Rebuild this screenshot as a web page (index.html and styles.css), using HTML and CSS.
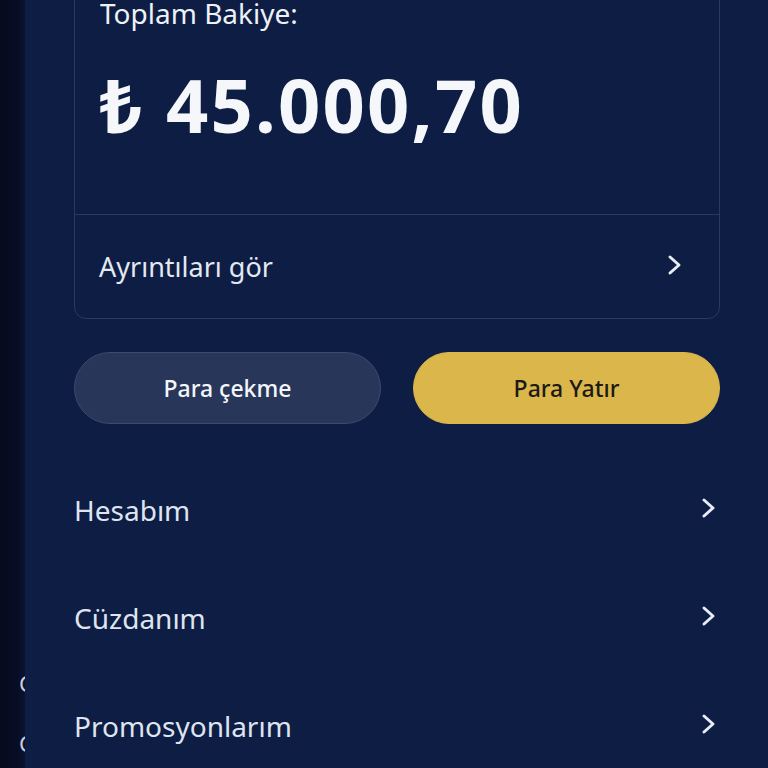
FILE: index.html
```html
<!DOCTYPE html>
<html lang="tr">
<head>
    <meta charset="UTF-8">
    <meta name="viewport" content="width=device-width, initial-scale=1.0">
    <title>Cüzdan</title>
    <link rel="stylesheet" href="styles.css">
</head>
<body>

    <div class="sayfa">
        <div class="arka-plan">
            <span class="harf harf-1">C</span>
            <span class="harf harf-2">C</span>
        </div>

        <div class="panel">
            <div class="bakiye-kart">
                <div class="bakiye-ust">
                    <div class="bakiye-etiket">Toplam Bakiye:</div>
                    <div class="bakiye-tutar">₺ 45.000,70</div>
                </div>
                <div class="bakiye-alt">
                    <span>Ayrıntıları gör</span>
                    <svg class="ok" width="16" height="22" viewBox="0 0 16 22"><path d="M3 3 L12 11 L3 19" fill="none" stroke="currentColor" stroke-width="3" stroke-linecap="round" stroke-linejoin="round"/></svg>
                </div>
            </div>

            <div class="butonlar">
                <button class="boton boton-cekme">Para çekme</button>
                <button class="boton boton-yatir">Para Yatır</button>
            </div>

            <ul class="menu">
                <li class="menu-satir">
                    <span>Hesabım</span>
                    <svg class="ok" width="16" height="22" viewBox="0 0 16 22"><path d="M3 3 L12 11 L3 19" fill="none" stroke="currentColor" stroke-width="3" stroke-linecap="round" stroke-linejoin="round"/></svg>
                </li>
                <li class="menu-satir">
                    <span>Cüzdanım</span>
                    <svg class="ok" width="16" height="22" viewBox="0 0 16 22"><path d="M3 3 L12 11 L3 19" fill="none" stroke="currentColor" stroke-width="3" stroke-linecap="round" stroke-linejoin="round"/></svg>
                </li>
                <li class="menu-satir">
                    <span>Promosyonlarım</span>
                    <svg class="ok" width="16" height="22" viewBox="0 0 16 22"><path d="M3 3 L12 11 L3 19" fill="none" stroke="currentColor" stroke-width="3" stroke-linecap="round" stroke-linejoin="round"/></svg>
                </li>
            </ul>
        </div>
    </div>

</body>
</html>
```

FILE: styles.css
```css
body {
    margin: 0;
    background-color: #060b1e;
    font-family: "Noto Sans", "Open Sans", sans-serif;
    overflow: hidden;
}
.sayfa {
    display: flex;
    height: 768px;
}
.arka-plan {
    width: 25px;
    flex-shrink: 0;
    position: relative;
    background: linear-gradient(to right, #050a1c 0%, #070d24 70%, #0a1330 100%);
}
/* harfler panelin arkasinda kaliyor */
.harf {
    position: absolute;
    left: 19px;
    color: #c9cfdc;
    font-size: 22px;
}
.harf-1 { top: 668px; }
.harf-2 { top: 728px; }
.panel {
    flex: 1;
    position: relative;
    z-index: 1;
    background-color: #0d1d44;
    padding: 0 48px 0 49px;
    color: #eef1f7;
}
.bakiye-kart {
    margin-top: -30px;
    border: 1px solid #2a3962;
    border-radius: 12px;
}
.bakiye-ust {
    padding: 0 25px;
    height: 243px;
    border-bottom: 1px solid #2a3962;
}
.bakiye-etiket {
    font-size: 28px;
    line-height: 26px;
    padding-top: 29px;
    color: #eef1f7;
}
.bakiye-tutar {
    font-size: 74px;
    font-weight: 700;
    line-height: 100px;
    margin-top: 29px;
    letter-spacing: 2.2px;
    color: #f6f7fa;
}
.bakiye-alt {
    display: flex;
    align-items: center;
    justify-content: space-between;
    height: 103px;
    padding: 0 36px 0 24px;
    font-size: 27px;
    color: #e4e8f1;
}
.ok {
    color: #e8ecf4;
    margin-top: -4px;
}
.butonlar {
    display: flex;
    gap: 32px;
    margin-top: 33px;
}
.boton {
    flex: 1;
    height: 72px;
    border-radius: 36px;
    font-family: "Noto Sans", "Open Sans", sans-serif;
    font-size: 23px;
    font-weight: 500;
    cursor: pointer;
}
.boton-cekme {
    background-color: #273659;
    border: 1px solid #3a4a70;
    color: #f4f6fa;
}
.boton-yatir {
    background-color: #dbb64a;
    border: 1px solid #dbb64a;
    color: #1b1a14;
}
.menu {
    list-style: none;
    margin: 32px 0 0 0;
    padding: 0;
}
.menu-satir {
    display: flex;
    align-items: center;
    justify-content: space-between;
    height: 108px;
    padding-right: 3px;
    font-size: 28px;
    color: #dfe4f0;
}
```
